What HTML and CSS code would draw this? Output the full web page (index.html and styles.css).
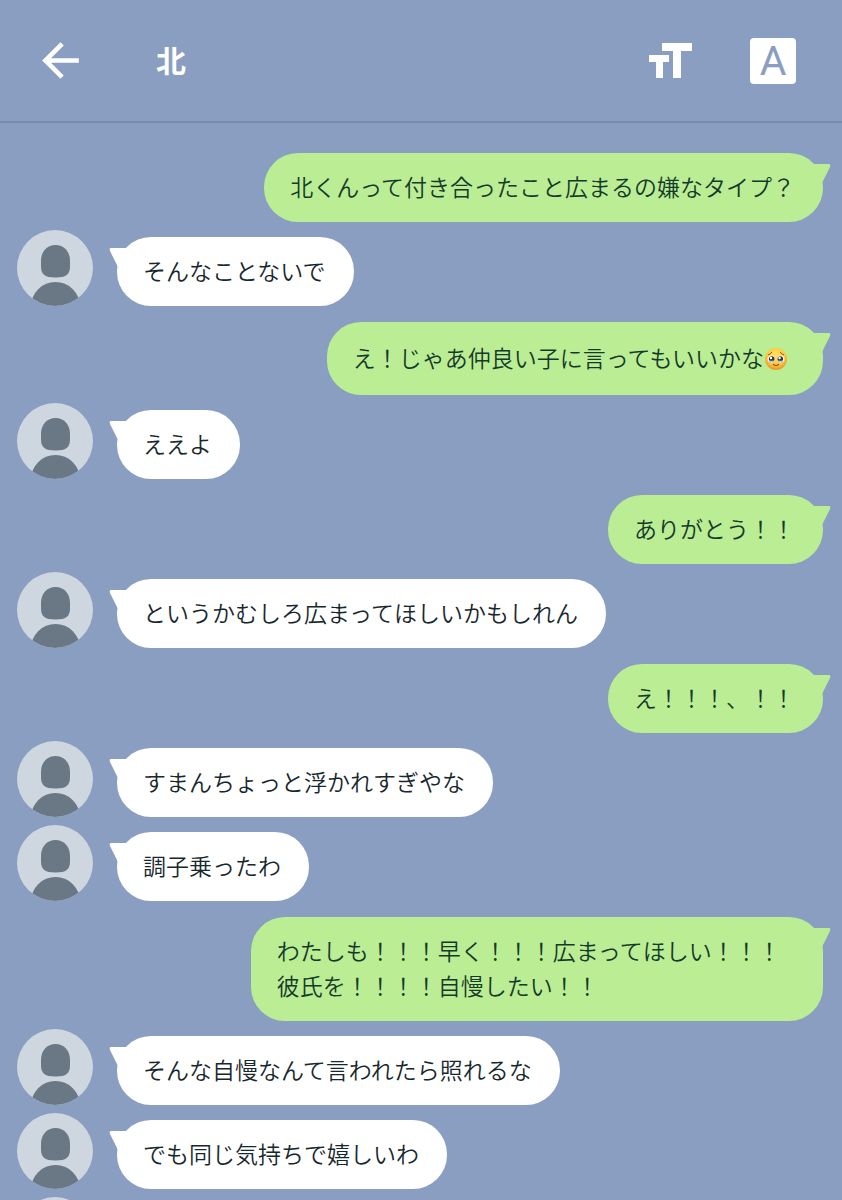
FILE: index.html
```html
<!DOCTYPE html>
<html lang="ja">
<head>
  <meta charset="UTF-8">
  <meta name="viewport" content="width=device-width, initial-scale=1.0">
  <title>北</title>
  <link rel="stylesheet" href="styles.css">
</head>
<body>
  <svg class="symbols" aria-hidden="true">
    <symbol id="avatar" viewBox="0 0 76 76">
      <clipPath id="avatar-clip"><circle cx="38" cy="38" r="38"/></clipPath>
      <circle cx="38" cy="38" r="38" fill="#ced6e0"/>
      <g clip-path="url(#avatar-clip)" fill="#6a7886">
        <path d="M38.500 15c8.500 0 14.500 6.500 14.500 16v5.500c0 8-4 11-14.500 11s-14.500-3-14.500-11v-5.500c0-9.500 6-16 14.500-16z"/>
        <circle cx="38.500" cy="76.500" r="24.500"/>
      </g>
    </symbol>
  </svg>

  <header class="header">
    <a class="icon-button" href="#" aria-label="戻る">
      <svg width="55" height="55" viewBox="0 0 24 24"><path fill="#fff" d="M20 11H7.830l5.590-5.590L12 4l-8 8 8 8 1.410-1.410L7.830 13H20z"/></svg>
    </a>
    <h1 class="title">北</h1>
    <button class="icon-button" type="button" aria-label="文字サイズ">
      <svg width="44" height="36" viewBox="0 0 44 36" fill="#fff">
        <path d="M13 0h30v8H32v27h-8V8H13z"/>
        <path d="M0 12h20v7h-6v16H7V19H0z"/>
      </svg>
    </button>
    <button class="letter-button" type="button">A</button>
  </header>

  <main class="chat">
    <div class="message sent">
      <p class="bubble">北くんって付き合ったこと広まるの嫌なタイプ？</p>
    </div>
    <div class="message received">
      <svg class="avatar"><use href="#avatar"/></svg>
      <p class="bubble">そんなことないで</p>
    </div>
    <div class="message sent">
      <p class="bubble with-emoji">え！じゃあ仲良い子に言ってもいいかな<svg class="emoji" role="img" aria-label="🥺" viewBox="0 0 24 24">
        <defs>
          <radialGradient id="face" cx="50%" cy="35%" r="65%">
            <stop offset="0" stop-color="#ffe468"/>
            <stop offset="0.650" stop-color="#fcc63c"/>
            <stop offset="1" stop-color="#e8912a"/>
          </radialGradient>
        </defs>
        <circle cx="12" cy="12" r="11" fill="url(#face)"/>
        <path d="M4 8q2-.500 4-3M20 8q-2-.500-4-3" fill="none" stroke="#9c5a1c" stroke-width="1"/>
        <circle cx="7.200" cy="12" r="3.500" fill="#fff"/>
        <circle cx="16.800" cy="12" r="3.500" fill="#fff"/>
        <circle cx="7.700" cy="12" r="2.800" fill="#3b3431"/>
        <circle cx="16.300" cy="12" r="2.800" fill="#3b3431"/>
        <path d="M5 13.800q2.200 1.600 4.600 0M14.400 13.800q2.200 1.600 4.600 0" fill="none" stroke="#9cc8ea" stroke-width="1.500"/>
        <circle cx="7" cy="11" r="1.200" fill="#fff"/>
        <circle cx="15.600" cy="11" r="1.200" fill="#fff"/>
        <path d="M9.500 17.500q2.500 2 5 0" fill="none" stroke="#8a4a17" stroke-width="1.200" stroke-linecap="round"/>
      </svg></p>
    </div>
    <div class="message received">
      <svg class="avatar"><use href="#avatar"/></svg>
      <p class="bubble">ええよ</p>
    </div>
    <div class="message sent">
      <p class="bubble">ありがとう！！</p>
    </div>
    <div class="message received">
      <svg class="avatar"><use href="#avatar"/></svg>
      <p class="bubble">というかむしろ広まってほしいかもしれん</p>
    </div>
    <div class="message sent">
      <p class="bubble">え！！！、！！</p>
    </div>
    <div class="message received">
      <svg class="avatar"><use href="#avatar"/></svg>
      <p class="bubble">すまんちょっと浮かれすぎやな</p>
    </div>
    <div class="message received">
      <svg class="avatar"><use href="#avatar"/></svg>
      <p class="bubble">調子乗ったわ</p>
    </div>
    <div class="message sent">
      <p class="bubble">わたしも！！！早く！！！広まってほしい！！！彼氏を！！！！自慢したい！！</p>
    </div>
    <div class="message received">
      <svg class="avatar"><use href="#avatar"/></svg>
      <p class="bubble">そんな自慢なんて言われたら照れるな</p>
    </div>
    <div class="message received">
      <svg class="avatar"><use href="#avatar"/></svg>
      <p class="bubble">でも同じ気持ちで嬉しいわ</p>
    </div>
    <div class="message received">
      <svg class="avatar"><use href="#avatar"/></svg>
    </div>
  </main>
</body>
</html>
```
FILE: styles.css
```css
* {
  box-sizing: border-box;
}
body {
  display: flex;
  flex-direction: column;
  height: 100vh;
  margin: 0;
  background-color: #8a9ec1;
  color: #17282d;
  font-family: "Noto Sans CJK JP", sans-serif;
}
.symbols {
  position: absolute;
  width: 0;
  height: 0;
}
.header {
  display: flex;
  flex-shrink: 0;
  align-items: center;
  height: 123px;
  padding: 0 46px 0 33px;
  border-bottom: 2px solid #758bb2;
}
.icon-button {
  display: flex;
  padding: 0;
  border: 0;
  background: none;
}
.title {
  flex: 1;
  margin: 0 0 0 68px;
  padding-bottom: 4px;
  color: #fff;
  font-size: 30px;
  font-weight: 700;
  line-height: 40px;
}
.letter-button {
  width: 46px;
  height: 46px;
  margin-left: 57px;
  padding: 0;
  border: 0;
  border-radius: 4px;
  background-color: #fff;
  color: #8a9ec1;
  font-family: Roboto, sans-serif;
  font-size: 41px;
  font-weight: 400;
  line-height: 46px;
}
.chat {
  display: flex;
  flex: 1;
  flex-direction: column;
  gap: 8px;
  min-height: 0;
  padding: 22px 19px 0 17px;
  overflow-y: auto;
  scrollbar-width: none;
}
.message {
  display: flex;
  flex-shrink: 0;
  align-items: flex-end;
}
.sent {
  justify-content: flex-end;
  margin-top: 8px;
}
.avatar {
  flex-shrink: 0;
  width: 76px;
  height: 76px;
  margin-right: 24px;
}
.bubble {
  position: relative;
  max-width: 71%;
  margin: 0;
  padding: 16px 28px 18px 26px;
  border-radius: 34px;
  background-color: #fff;
  font-size: 23px;
  font-weight: 350;
  line-height: 35px;
}
.sent .bubble {
  background-color: #bbed95;
  color: #153a2a;
}
/* bubble tail */
.bubble::before {
  content: "";
  position: absolute;
  top: 11px;
  left: -8px;
  width: 24px;
  height: 22px;
  background-color: inherit;
  clip-path: path("M2 0H24V22H9V19L1 3Q0 0 2 0Z");
}
.sent .bubble::before {
  right: -8px;
  left: auto;
  transform: scaleX(-1);
}
.sent .with-emoji {
  line-height: 39px;
}
.emoji {
  width: 24px;
  height: 24px;
  margin-right: 7px;
  vertical-align: -4px;
}
```
